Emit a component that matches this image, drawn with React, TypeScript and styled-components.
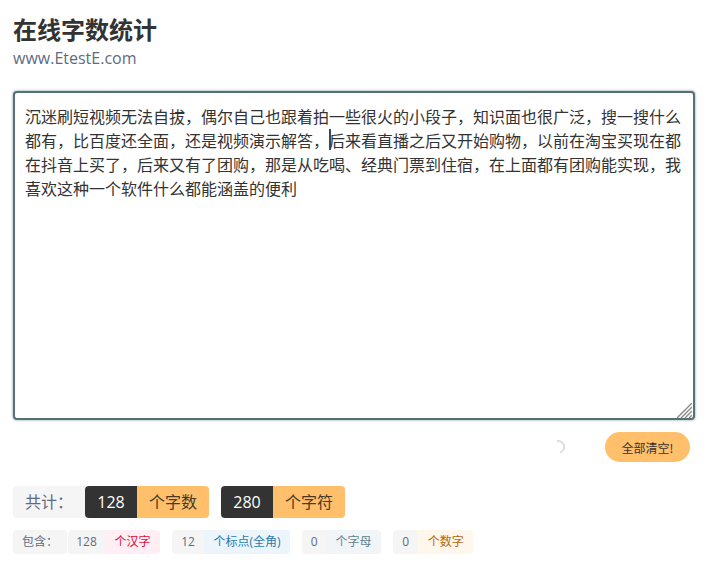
import styled, { createGlobalStyle } from "styled-components";

const TEXT =
  "沉迷刷短视频无法自拔，偶尔自己也跟着拍一些很火的小段子，知识面也很广泛，搜一搜什么都有，比百度还全面，还是视频演示解答，后来看直播之后又开始购物，以前在淘宝买现在都在抖音上买了，后来又有了团购，那是从吃喝、经典门票到住宿，在上面都有团购能实现，我喜欢这种一个软件什么都能涵盖的便利";

const details = [
  { num: 128, width: 37, label: "个汉字", bg: "#ffeef3", fg: "#d6103f" },
  { num: 12, width: 32, label: "个标点(全角)", bg: "#ebf5fb", fg: "#2a7ab0" },
  { num: 0, width: 24, label: "个字母", bg: "#f1f5f7", fg: "#5f7f8c" },
  { num: 0, width: 25, label: "个数字", bg: "#fff6ec", fg: "#b5650a" },
];

export default function App() {
  return (
    <Page>
      <GlobalStyle />
      <Title>在线字数统计</Title>
      <Site>www.EtestE.com</Site>
      <EditorWrap>
        <Editor defaultValue={TEXT} spellCheck={false} />
        <Caret />
        <Grip width="15" height="15" viewBox="0 0 15 15">
          <path d="M0 15L15 0M4 15L15 4M8 15L15 8M12 15L15 12" stroke="#8a8a8a" strokeWidth="1.4" />
        </Grip>
      </EditorWrap>
      <Actions>
        <svg width="14" height="14" viewBox="0 0 14 14">
          <path d="M6 1.3A5.6 5.6 0 0 1 9 12.4" fill="none" stroke="#dedede" strokeWidth="2" />
        </svg>
        <ClearButton>全部清空!</ClearButton>
      </Actions>
      <Totals>
        <TotalLabel>共计：</TotalLabel>
        <TotalGroup>
          <TotalNum>128</TotalNum>
          <TotalUnit>个字数</TotalUnit>
        </TotalGroup>
        <TotalGroup>
          <TotalNum>280</TotalNum>
          <TotalUnit>个字符</TotalUnit>
        </TotalGroup>
      </Totals>
      <Details>
        <DetailLabel>包含：</DetailLabel>
        {details.map((d) => (
          <DetailGroup key={d.label}>
            <DetailNum $width={d.width}>{d.num}</DetailNum>
            <DetailUnit $bg={d.bg} $fg={d.fg}>
              {d.label}
            </DetailUnit>
          </DetailGroup>
        ))}
      </Details>
    </Page>
  );
}

const GlobalStyle = createGlobalStyle`
  body {
    margin: 0;
    background: #fff;
    font-family: "Open Sans", "Noto Sans CJK SC", sans-serif;
  }
`;

const Page = styled.div`
  padding: 14px 13px 0;
`;

const Title = styled.h1`
  margin: 0;
  font-size: 24px;
  line-height: 31px;
  font-weight: 700;
  color: #333;
`;

const Site = styled.div`
  margin-top: 2px;
  font-size: 16px;
  line-height: 22px;
  color: #5d6b82;
`;

const EditorWrap = styled.div`
  position: relative;
  width: 682px;
  height: 329px;
  margin-top: 22px;
`;

const Editor = styled.textarea`
  display: block;
  box-sizing: border-box;
  width: 100%;
  height: 100%;
  padding: 11px 10px;
  border: 2px solid #56707a;
  border-radius: 4px;
  box-shadow: 0 0 2px 1px rgba(86, 112, 122, 0.35);
  outline: none;
  resize: none;
  font-family: "Noto Sans CJK SC", sans-serif;
  font-size: 16px;
  line-height: 24px;
  color: #333;
`;

const Caret = styled.span`
  position: absolute;
  left: 316px;
  top: 38px;
  width: 2px;
  height: 21px;
  background: #3a4a55;
`;

const Grip = styled.svg`
  position: absolute;
  right: 3px;
  bottom: 2px;
`;

const Actions = styled.div`
  display: flex;
  align-items: center;
  justify-content: flex-end;
  gap: 40px;
  height: 30px;
  margin-top: 12px;
  padding-right: 11px;
`;

const ClearButton = styled.button`
  width: 85px;
  height: 30px;
  padding: 0;
  border: none;
  border-radius: 15px;
  background: #ffbf6b;
  font-family: "Noto Sans CJK SC", sans-serif;
  font-size: 12px;
  color: #333;
`;

const Totals = styled.div`
  display: flex;
  gap: 12px;
  margin-top: 24px;
`;

const TotalLabel = styled.div`
  box-sizing: border-box;
  width: 72px;
  height: 32px;
  margin-right: -12px;
  padding-left: 12px;
  border-radius: 4px 0 0 4px;
  background: #f5f5f5;
  font-size: 16px;
  line-height: 32px;
  color: #5d6b82;
`;

const TotalGroup = styled.div`
  display: flex;
  height: 32px;
  border-radius: 4px;
  overflow: hidden;
  font-size: 16px;
  line-height: 32px;
  text-align: center;
`;

const TotalNum = styled.div`
  width: 52px;
  background: #333;
  color: #fff;
`;

const TotalUnit = styled.div`
  width: 72px;
  background: #ffbf6b;
  color: #4a3a24;
`;

const Details = styled.div`
  display: flex;
  gap: 12px;
  margin-top: 12px;
`;

const DetailLabel = styled.div`
  width: 54px;
  height: 24px;
  margin-right: -11px;
  border-radius: 4px;
  background: #f5f5f5;
  font-size: 12px;
  line-height: 24px;
  text-align: center;
  color: #5d6b82;
`;

const DetailGroup = styled.div`
  display: flex;
  height: 24px;
  border-radius: 4px;
  overflow: hidden;
  font-size: 12px;
  line-height: 24px;
  text-align: center;
`;

const DetailNum = styled.div<{ $width: number }>`
  width: ${(p) => p.$width}px;
  background: #f5f5f5;
  color: #5d6b82;
`;

const DetailUnit = styled.div<{ $bg: string; $fg: string }>`
  padding: 0 9.5px;
  background: ${(p) => p.$bg};
  color: ${(p) => p.$fg};
`;
